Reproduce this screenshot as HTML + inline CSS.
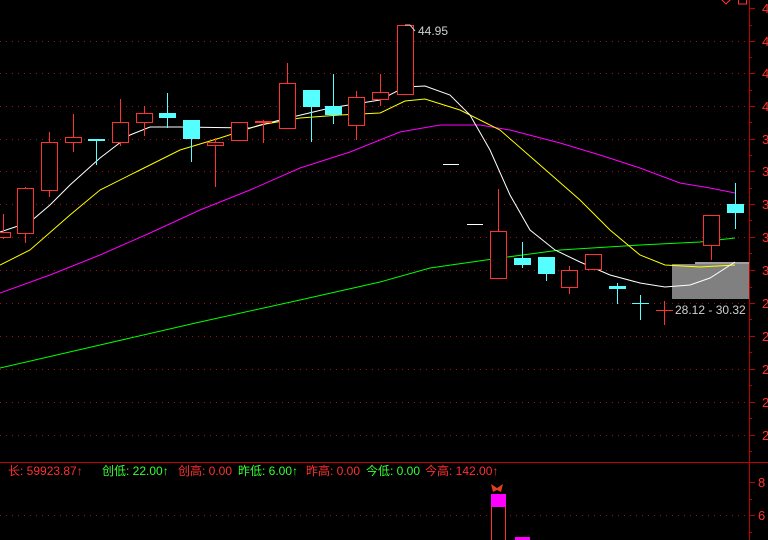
<!DOCTYPE html>
<html><head><meta charset="utf-8"><style>
html,body{margin:0;padding:0;background:#000;width:768px;height:540px;overflow:hidden}
svg{display:block}
text{font-family:"Liberation Sans","Noto Sans CJK SC",sans-serif}
</style></head><body>
<svg width="768" height="540" viewBox="0 0 768 540" xmlns="http://www.w3.org/2000/svg" shape-rendering="crispEdges">
<g stroke="#a01010" stroke-dasharray="1 5" stroke-width="1">
<line x1="0" y1="41.5" x2="749" y2="41.5"/><line x1="0" y1="73.5" x2="749" y2="73.5"/>
<line x1="0" y1="106.5" x2="749" y2="106.5"/><line x1="0" y1="139.5" x2="749" y2="139.5"/>
<line x1="0" y1="171.5" x2="749" y2="171.5"/><line x1="0" y1="204.5" x2="749" y2="204.5"/>
<line x1="0" y1="237.5" x2="749" y2="237.5"/><line x1="0" y1="270.5" x2="749" y2="270.5"/>
<line x1="0" y1="303.5" x2="749" y2="303.5"/><line x1="0" y1="336.5" x2="749" y2="336.5"/>
<line x1="0" y1="369.5" x2="749" y2="369.5"/><line x1="0" y1="402.5" x2="749" y2="402.5"/>
<line x1="0" y1="435.5" x2="749" y2="435.5"/><line x1="0" y1="515.5" x2="749" y2="515.5"/>
</g>
<line x1="749.5" y1="0" x2="749.5" y2="540" stroke="#c00000"/>
<line x1="0" y1="462.5" x2="768" y2="462.5" stroke="#c00000"/>
<g stroke="#c00000">
<path d="M749 8.5h6M749 41.5h6M749 73.5h6M749 106.5h6M749 139.5h6M749 171.5h6M749 204.5h6M749 237.5h6M749 270.5h6M749 303.5h6M749 336.5h6M749 369.5h6M749 402.5h6M749 435.5h6M749 482.5h6M749 515.5h6"/>
<path d="M749 25.5h3M749 57.5h3M749 90.5h3M749 122.5h3M749 155.5h3M749 188.5h3M749 220.5h3M749 253.5h3M749 287.5h3M749 319.5h3M749 352.5h3M749 385.5h3M749 418.5h3M749 451.5h3M749 499.5h3M749 532.5h3"/>
</g>
<g fill="#ff3030" font-size="13">
<text x="762" y="13">4</text><text x="762" y="46">4</text><text x="762" y="78">4</text><text x="762" y="111">4</text>
<text x="762" y="144">3</text><text x="762" y="176">3</text><text x="762" y="209">3</text><text x="762" y="242">3</text><text x="762" y="275">3</text>
<text x="762" y="308">2</text><text x="762" y="341">2</text><text x="762" y="374">2</text><text x="762" y="407">2</text><text x="762" y="440">2</text>
<text x="758" y="487">8</text><text x="758" y="520">6</text>
</g>
<path d="M722 0l4 4 4-4" stroke="#ff3030" fill="none"/>
<rect x="738.5" y="-3" width="8" height="7" stroke="#ff3030" fill="none"/>
<rect x="672" y="264" width="77" height="35" fill="#808080"/>
<rect x="695" y="262" width="54" height="2" fill="#a0a0a0"/>
<g fill="none" stroke-width="1" shape-rendering="auto">
<polyline stroke="#00ff00" points="0,368 100,345 200,322 300,300 380,282 430,268 500,258 560,250 640,245 700,242 735,238"/>
<polyline stroke="#ff00ff" points="0,293 50,275 100,255 150,233 200,210 250,190 300,168 350,152 400,132 440,125 480,125 510,130 560,143 600,155 640,168 680,183 710,188 735,193"/>
<polyline stroke="#ffff00" points="0,265 30,250 70,215 100,190 140,170 180,150 220,138 260,125 300,118 340,115 380,113 405,101 425,99 460,110 500,130 540,165 580,200 610,230 640,255 665,265 700,267 735,265"/>
<polyline stroke="#ffffff" points="0,232 30,222 50,205 70,185 100,158 130,135 150,127 180,127 250,128 280,120 330,108 380,100 405,87 425,86 450,95 470,115 490,150 510,195 530,230 555,250 580,262 610,275 640,283 665,287 690,285 710,278 735,262"/>
</g>
<path stroke="#ff3232" fill="none" d="M3.5 214v25M25.5 187v56M49.5 132v65M73.5 114v38M120.5 99v47M144.5 106v30M215.5 138v49M263.5 120v23M287.5 63v65M356.5 91v49M380.5 74v32M498.5 189v42M569.5 266v28M711.5 245v15M664.5 301v24M656 310.5h17"/>
<g fill="#ff3232">
<rect x="-5" y="232" width="16" height="6"/><rect x="17" y="188" width="17" height="46"/>
<rect x="41" y="142" width="17" height="49"/><rect x="65" y="137" width="17" height="6"/>
<rect x="112" y="122" width="17" height="21"/><rect x="136" y="113" width="17" height="10"/>
<rect x="207" y="142" width="17" height="4"/><rect x="231" y="122" width="17" height="19"/>
<rect x="255" y="121" width="17" height="2"/><rect x="279" y="83" width="17" height="46"/>
<rect x="348" y="97" width="17" height="29"/><rect x="372" y="92" width="17" height="8"/>
<rect x="397" y="25" width="17" height="70"/><rect x="490" y="231" width="17" height="48"/>
<rect x="561" y="270" width="17" height="18"/><rect x="585" y="254" width="17" height="16"/>
<rect x="703" y="215" width="17" height="31"/>
</g>
<g fill="#000">
<rect x="-4" y="233" width="14" height="4"/><rect x="18" y="189" width="15" height="44"/>
<rect x="42" y="143" width="15" height="47"/><rect x="66" y="138" width="15" height="4"/>
<rect x="113" y="123" width="15" height="19"/><rect x="137" y="114" width="15" height="8"/>
<rect x="208" y="143" width="15" height="2"/><rect x="232" y="123" width="15" height="17"/>
<rect x="280" y="84" width="15" height="44"/>
<rect x="349" y="98" width="15" height="27"/><rect x="373" y="93" width="15" height="6"/>
<rect x="398" y="26" width="15" height="68"/><rect x="491" y="232" width="15" height="46"/>
<rect x="562" y="271" width="15" height="16"/><rect x="586" y="255" width="15" height="14"/>
<rect x="704" y="216" width="15" height="29"/>
</g>
<g stroke="#55ffff" fill="#55ffff">
<path d="M96.5 139v26M167.5 93v35M191.5 120v42M311.5 90v52M333.5 74v50M522.5 242v26M546.5 257v24M617.5 283v21M640.5 295v25M735.5 183v46M632 303.5h17"/>
<rect x="88" y="139" width="17" height="2" stroke="none"/>
<rect x="159" y="113" width="17" height="5" stroke="none"/>
<rect x="183" y="120" width="17" height="19" stroke="none"/>
<rect x="303" y="90" width="17" height="17" stroke="none"/>
<rect x="325" y="106" width="17" height="9" stroke="none"/>
<rect x="514" y="258" width="17" height="7" stroke="none"/>
<rect x="538" y="257" width="17" height="17" stroke="none"/>
<rect x="609" y="286" width="17" height="3" stroke="none"/>
<rect x="727" y="204" width="17" height="9" stroke="none"/>
</g>
<g fill="#fff"><rect x="443" y="164" width="16" height="1"/><rect x="467" y="224" width="16" height="1"/></g>
<path d="M405 25l5 0 5 6" stroke="#ccc" fill="none" shape-rendering="auto"/>
<text x="418" y="35" fill="#d0d0d0" font-size="12">44.95</text>
<text x="675" y="314" fill="#d0d0d0" font-size="12">28.12 - 30.32</text>
<text y="475" font-size="12"><tspan x="8" fill="#ff3030">长: 59923.87↑</tspan><tspan x="102" fill="#33ff33">创低: 22.00↑</tspan><tspan x="178" fill="#ff3030">创高: 0.00</tspan><tspan x="238" fill="#33ff33">昨低: 6.00↑</tspan><tspan x="306" fill="#ff3030">昨高: 0.00</tspan><tspan x="366" fill="#33ff33">今低: 0.00</tspan><tspan x="425" fill="#ff3030">今高: 142.00↑</tspan></text>
<rect x="491" y="494" width="15" height="46" fill="#ff3030"/>
<rect x="492" y="507" width="13" height="33" fill="#000"/>
<rect x="491" y="494" width="15" height="13" fill="#ff00ff"/>
<rect x="515" y="537" width="15" height="3" fill="#ff00ff"/>
<path d="M491 484l6 4 6-4-2 8-4-2-4 2z" fill="#e04020" shape-rendering="auto"/>
</svg>
</body></html>
